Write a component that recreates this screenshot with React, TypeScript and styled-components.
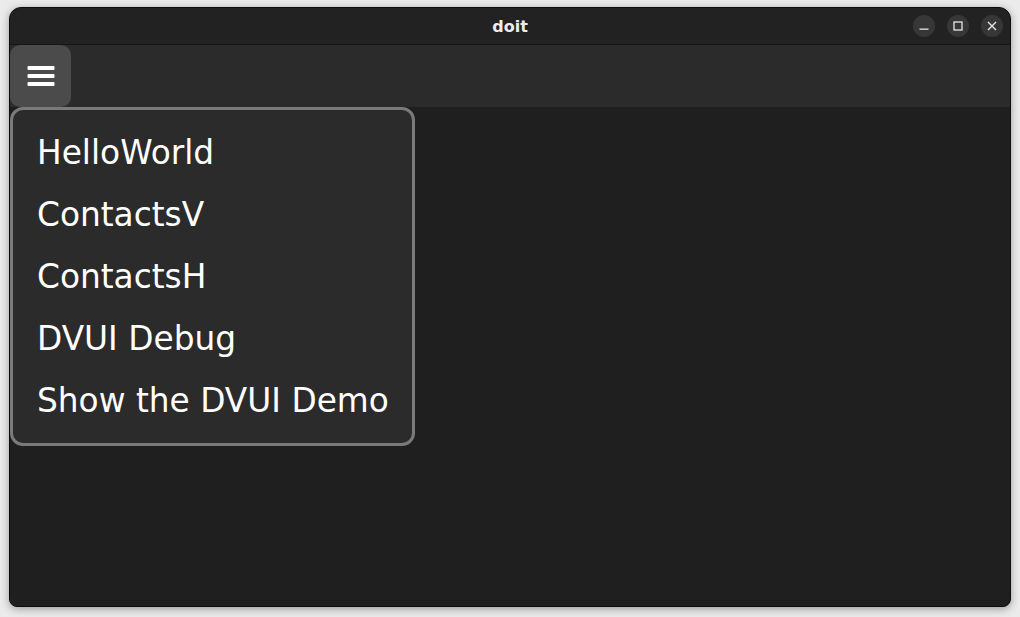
import styled, { createGlobalStyle } from 'styled-components';

const GlobalStyle = createGlobalStyle`
  html, body {
    margin: 0;
    padding: 0;
    background: #ebebeb;
  }
  * { box-sizing: border-box; }
`

const Page = styled.div`
  width: 1020px;
  height: 617px;
  padding: 7px 9px 10px 9px;
`

const Window = styled.div`
  position: relative;
  width: 1002px;
  height: 600px;
  background: #1f1f1f;
  border: 1px solid #0c0c0c;
  border-radius: 12px 12px 8px 8px;
  box-shadow: 0 2px 8px rgba(0, 0, 0, 0.35);
  display: flex;
  flex-direction: column;
  overflow: hidden;
`

const TitleBar = styled.div`
  height: 37px;
  flex: none;
  background: #222222;
  border-bottom: 1px solid #151515;
  display: flex;
  align-items: center;
  justify-content: center;
  position: relative;
`

const Title = styled.span`
  font-family: "DejaVu Sans", "Noto Sans", sans-serif;
  font-weight: bold;
  font-size: 16px;
  color: #ececec;
`

const Controls = styled.div`
  position: absolute;
  right: 7px;
  top: 7px;
  display: flex;
  gap: 12px;
`

const ControlButton = styled.div`
  width: 22px;
  height: 22px;
  border-radius: 50%;
  background: #373737;
  display: flex;
  align-items: center;
  justify-content: center;
`

const Toolbar = styled.div`
  height: 62px;
  flex: none;
  background: #2b2b2b;
  display: flex;
`

const MenuButton = styled.div`
  width: 61px;
  height: 62px;
  background: #4b4b4b;
  border-radius: 10px;
  display: flex;
  align-items: center;
  justify-content: center;
`

const Content = styled.div`
  flex: 1;
  background: #1f1f1f;
  position: relative;
`

const Menu = styled.div`
  position: absolute;
  left: 0;
  top: 0;
  width: 405px;
  height: 339px;
  background: #2b2b2b;
  border: 3px solid #7a7a7a;
  border-radius: 13px;
  padding: 12px 0 10px;
  display: flex;
  flex-direction: column;
`

const MenuItem = styled.div`
  height: 62px;
  display: flex;
  align-items: center;
  padding-left: 24px;
  font-family: "DejaVu Sans", "Liberation Sans", sans-serif;
  font-size: 32.8px;
  color: #ffffff;
  white-space: nowrap;
`

const items = ['HelloWorld', 'ContactsV', 'ContactsH', 'DVUI Debug', 'Show the DVUI Demo'];

export default function App() {
  return (
    <Page>
      <GlobalStyle />
      <Window>
        <TitleBar>
          <Title>doit</Title>
          <Controls>
            <ControlButton>
              <svg width="10" height="10" viewBox="0 0 10 10">
                <rect x="0.5" y="7.5" width="9" height="1.3" fill="#e6e6e6" />
              </svg>
            </ControlButton>
            <ControlButton>
              <svg width="10" height="10" viewBox="0 0 10 10">
                <rect x="1" y="1" width="8" height="8" fill="none" stroke="#e6e6e6" strokeWidth="1.3" />
              </svg>
            </ControlButton>
            <ControlButton>
              <svg width="10" height="10" viewBox="0 0 10 10">
                <path d="M1 1 L9 9 M9 1 L1 9" stroke="#e6e6e6" strokeWidth="1.4" />
              </svg>
            </ControlButton>
          </Controls>
        </TitleBar>
        <Toolbar>
          <MenuButton>
            <svg width="28" height="20" viewBox="0 0 28 20">
              <rect x="0.5" y="0" width="27" height="4" rx="1" fill="#ffffff" />
              <rect x="0.5" y="8" width="27" height="4" rx="1" fill="#ffffff" />
              <rect x="0.5" y="16" width="27" height="4" rx="1" fill="#ffffff" />
            </svg>
          </MenuButton>
        </Toolbar>
        <Content>
          <Menu>
            {items.map((label) => (
              <MenuItem key={label}>{label}</MenuItem>
            ))}
          </Menu>
        </Content>
      </Window>
    </Page>
  );
}
